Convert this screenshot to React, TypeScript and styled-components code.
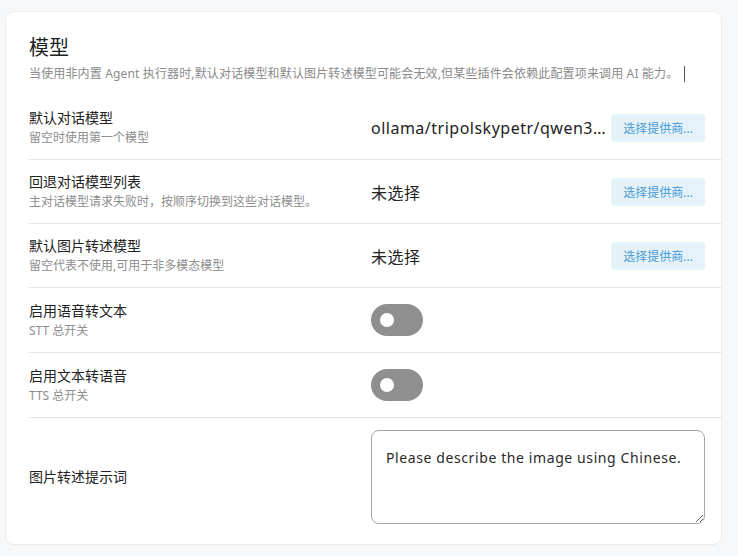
import React from 'react';
import styled, { createGlobalStyle } from 'styled-components';

const GlobalStyle = createGlobalStyle`
    html, body {
        margin:0;
        padding:0;
        background:#f7f8fa;
        font-family:"Noto Sans", "Noto Sans CJK SC", sans-serif;
    }
    * { box-sizing:border-box; }
`

const Page = styled.div`
    padding:11px 16px 11px 5px;
`

const Card = styled.section`
    background:#fff;
    border:1px solid #ececec;
    border-radius:9px;
    padding:0 0 8px 23px;
`

const Header = styled.header`
    padding:22px 0 13px;
`

const Title = styled.h2`
    margin:0;
    font-size:20px;
    line-height:28px;
    font-weight:400;
    color:#1f1f1f;
`

const Hint = styled.p`
    margin:3px 0 0;
    font-size:12px;
    line-height:18px;
    letter-spacing:0.15px;
    color:#8a8a8a;
    display:flex;
    align-items:center;
`

const Caret = styled.span`
    display:inline-block;
    width:1px;
    height:16px;
    margin-left:6px;
    background:#555;
`

const Row = styled.div<{ $last?: boolean }>`
    display:grid;
    grid-template-columns:342px minmax(0, 1fr) auto;
    align-items:center;
    padding:12px 16px 12px 0;
    border-bottom:${props => props.$last ? 'none' : '1px solid #e4e4e4'};
`

const LabelBox = styled.div`
    display:flex;
    flex-direction:column;
`

const Label = styled.span`
    font-size:14px;
    line-height:20px;
    color:#222;
`

const Sub = styled.span`
    margin-top:1px;
    font-size:12px;
    line-height:18px;
    color:#8d8d8d;
`

const Value = styled.span`
    font-size:16px;
    letter-spacing:0.5px;
    color:#222;
    white-space:nowrap;
    overflow:hidden;
    text-overflow:ellipsis;
    padding-right:5px;
`

const PickButton = styled.button`
    height:28px;
    padding:0 12px;
    border:none;
    border-radius:4px;
    background:#e6f2fa;
    color:#4a9bd3;
    font-family:inherit;
    font-size:12px;
    cursor:pointer;
`

const Switch = styled.span<{ $on?: boolean }>`
    position:relative;
    display:inline-block;
    width:52px;
    height:32px;
    border-radius:16px;
    background:${props => props.$on ? '#4a9bd3' : '#8f8f8f'};

    &::after {
        content:'';
        position:absolute;
        top:9px;
        left:${props => props.$on ? '29px' : '9px'};
        width:14px;
        height:14px;
        border-radius:50%;
        background:#fff;
    }
`

const SwitchCell = styled.div`
    display:flex;
    align-items:center;
    height:40px;
`

const Prompt = styled.textarea`
    grid-column:2 / 4;
    display:block;
    height:94px;
    padding:17px 14px 15px;
    border:1px solid #a6a6a6;
    border-radius:8px;
    font-family:inherit;
    font-size:14px;
    line-height:20px;
    letter-spacing:0.6px;
    color:#2a2a2a;
    resize:vertical;
    outline:none;
`

type ModelRow = { label: string, sub: string, value: string }

const models: ModelRow[] = [
    { label: '默认对话模型', sub: '留空时使用第一个模型', value: 'ollama/tripolskypetr/qwen3.5-uncensored-aggressive:9b' },
    { label: '回退对话模型列表', sub: '主对话模型请求失败时，按顺序切换到这些对话模型。', value: '未选择' },
    { label: '默认图片转述模型', sub: '留空代表不使用,可用于非多模态模型', value: '未选择' },
]

const toggles = [
    { label: '启用语音转文本', sub: 'STT 总开关' },
    { label: '启用文本转语音', sub: 'TTS 总开关' },
]

const App = () => {
    return (
        <Page>
            <GlobalStyle />
            <Card>
                <Header>
                    <Title>模型</Title>
                    <Hint>当使用非内置 Agent 执行器时,默认对话模型和默认图片转述模型可能会无效,但某些插件会依赖此配置项来调用 AI 能力。<Caret /></Hint>
                </Header>
                {models.map(m => (
                    <Row key={m.label}>
                        <LabelBox>
                            <Label>{m.label}</Label>
                            <Sub>{m.sub}</Sub>
                        </LabelBox>
                        <Value>{m.value}</Value>
                        <PickButton>选择提供商...</PickButton>
                    </Row>
                ))}
                {toggles.map(t => (
                    <Row key={t.label}>
                        <LabelBox>
                            <Label>{t.label}</Label>
                            <Sub>{t.sub}</Sub>
                        </LabelBox>
                        <SwitchCell><Switch /></SwitchCell>
                    </Row>
                ))}
                <Row $last>
                    <Label>图片转述提示词</Label>
                    <Prompt defaultValue="Please describe the image using Chinese." />
                </Row>
            </Card>
        </Page>
    )
}

export default App;
